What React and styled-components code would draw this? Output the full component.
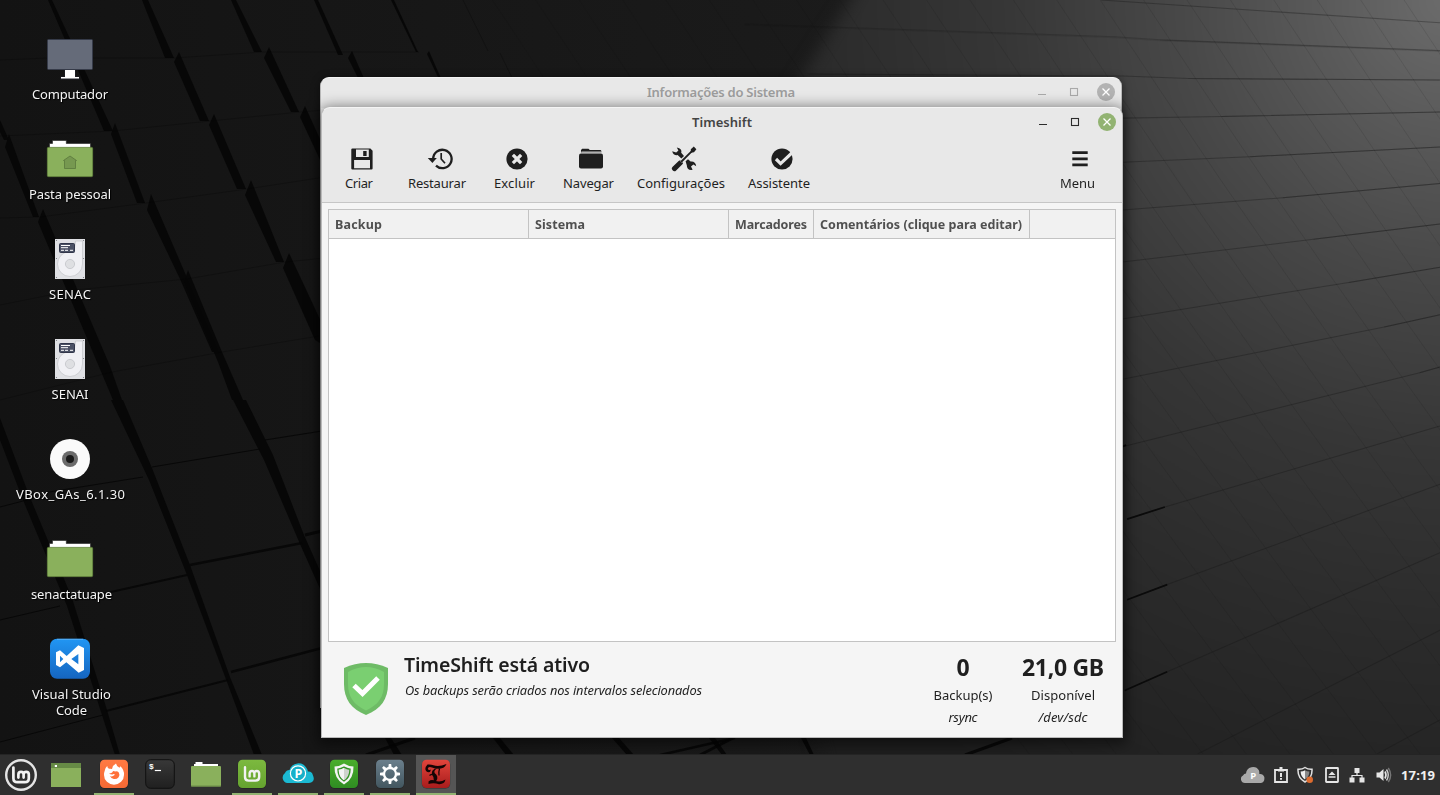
import React, { useLayoutEffect, useRef, useState } from "react";
import styled, { createGlobalStyle } from "styled-components";

const Global = createGlobalStyle`
  * { box-sizing: border-box; }
  html, body { margin: 0; padding: 0; overflow: hidden; background: #151515; }
  body { font-family: "Noto Sans", "Open Sans", sans-serif; font-size: 13px; color: #1f1f1f; }
  svg { display: block; flex: none; }
`;

/* ---------- text tracked to a given width ---------- */
const Tracked = styled.span`
  display: block;
  white-space: nowrap;
`;

function Fit({ w, children }) {
  const ref = useRef(null);
  const [spacing, setSpacing] = useState(0);
  useLayoutEffect(() => {
    const range = document.createRange();
    range.selectNodeContents(ref.current);
    const natural = range.getBoundingClientRect().width;
    setSpacing((w - natural) / Math.max(1, children.length - 1));
  }, [w, children]);
  return (
    <Tracked ref={ref} style={{ letterSpacing: spacing, width: w }}>
      {children}
    </Tracked>
  );
}

/* ---------- page ---------- */
const Screen = styled.main`
  position: relative;
  width: 1440px;
  height: 795px;
  display: flex;
  flex-direction: column;
  overflow: hidden;
`;
const Backdrop = styled.svg`
  position: absolute;
  inset: 0;
`;
const Desktop = styled.section`
  position: relative;
  flex: 1;
  min-height: 0;
  padding-top: 34px;
`;
const Shortcuts = styled.div`
  width: 140px;
  display: flex;
  flex-direction: column;
`;
const Shortcut = styled.div`
  height: 100px;
  display: flex;
  flex-direction: column;
  align-items: center;
  color: #f4f4f4;
  line-height: 16px;
  text-shadow: 1px 1px 1px #000;
`;
const ShortcutArt = styled.div`
  height: 50px;
  margin-bottom: 2px;
`;
const ShortcutLine = styled.div`
  transform: translateX(${(p) => p.$shift || 0}px);
`;

/* ---------- windows ---------- */
const Window = styled.article`
  position: absolute;
  left: ${(p) => p.$x}px;
  top: ${(p) => p.$y}px;
  width: 802px;
  height: 631px;
  border: 1px solid #b9b9b9;
  border-top-color: #f4f4f4;
  border-radius: 9px 9px 0 0;
  background: #f5f5f5;
  box-shadow: 0 ${(p) => (p.$front ? "3px 14px 3px rgba(0,0,0,.5)" : "2px 8px 1px rgba(0,0,0,.4)")};
  display: flex;
  flex-direction: column;
`;
const TitleBar = styled.header`
  height: 30px;
  padding-bottom: 3px;
  display: grid;
  grid-template-columns: 1fr auto 1fr;
  align-items: center;
  background: #e8e8e8;
  border-radius: 8px 8px 0 0;
  color: ${(p) => (p.$active ? "#444" : "#9d9d9d")};
  font-weight: 600;
  line-height: 16px;
`;
const Controls = styled.div`
  justify-self: end;
  display: flex;
  padding-right: 5px;
`;
const Toolbar = styled.nav`
  height: 65px;
  padding: 8px 12px 0 6px;
  display: flex;
  background: #e8e8e8;
  border-bottom: 1px solid #c6c6c6;
`;
const Tool = styled.button`
  all: unset;
  width: ${(p) => p.$w}px;
  display: flex;
  flex-direction: column;
  align-items: center;
  line-height: 18px;
  ${(p) => p.$end && "margin-left: auto;"}
`;
const ToolArt = styled.div`
  padding-left: ${(p) => p.$nudge}px;
  height: 28px;
`;
const Body = styled.div`
  flex: 1;
  padding: 6px 6px 0;
  display: flex;
  flex-direction: column;
`;
const Table = styled.div`
  height: 433px;
  border: 1px solid #c3c3c3;
  background: #fff;
`;
const Head = styled.div`
  display: grid;
  grid-template-columns: 200px 200px 85px 216px 1fr;
  height: 29px;
  background: #f1f1f1;
  border-bottom: 1px solid #c3c3c3;
`;
const HeadCell = styled.div`
  padding: 6px 0 0 6px;
  border-right: 1px solid #c3c3c3;
  color: #505050;
  font-weight: 700;
  font-size: 12.5px;
  line-height: 18px;
  &:last-child { border-right: 0; }
`;
const Status = styled.footer`
  display: flex;
  padding: 11px 3px 0 16px;
`;
const StatusText = styled.div`
  margin: -1px auto 0 16px;
`;
const StatusTitle = styled.h1`
  margin: 0;
  font-size: 19.5px;
  font-weight: 600;
  line-height: 25px;
`;
const Italic = styled.div`
  font-style: italic;
  line-height: 22px;
  margin-top: ${(p) => p.$top || 0}px;
  ${(p) => p.$small && "font-size: 12.8px; padding-left: 1px;"}
`;
const Stat = styled.div`
  width: ${(p) => p.$w}px;
  display: flex;
  flex-direction: column;
  align-items: center;
  line-height: 22px;
`;
const StatValue = styled.div`
  font-size: 23px;
  font-weight: 700;
  line-height: 28px;
  margin-bottom: 3px;
`;
const ShieldBox = styled.div`
  padding-top: 2px;
`;

/* ---------- taskbar ---------- */
const Taskbar = styled.footer`
  position: relative;
  height: 41px;
  display: flex;
  background: #2f2f2f;
  border-top: 1px solid #242424;
  padding-left: 1px;
`;
const Launcher = styled.div`
  width: 40px;
  margin-right: ${(p) => p.$gap}px;
  display: flex;
  align-items: center;
  justify-content: center;
  background: ${(p) => (p.$active ? "#555" : "transparent")};
  border-bottom: 2px solid ${(p) => (p.$open ? "#92b372" : "transparent")};
`;
const Tray = styled.div`
  margin-left: auto;
  display: flex;
  align-items: center;
  padding-right: 5px;
  color: #f0f0f0;
  font-weight: 700;
`;
const TrayItem = styled.div`
  margin-right: ${(p) => p.$gap}px;
`;

/* ---------- wallpaper ---------- */
const gaps = [
  "48,0 52,0 113,131 104,131", "142,0 148,0 174,58 165,58", "231,0 236,0 262,52 254,52",
  "314,0 318,0 343,55 338,55", "391,0 394,0 418,52 416,52", "174,62 179,52 209,121 200,121",
  "264,58 269,47 299,112 291,112", "348,58 352,51 370,92 365,92", "427,54 429,51 447,92 445,92",
  "0,120 9,140 4,140 0,132", "111,134 115,123 145,203 137,203", "209,125 214,114 246,189 237,189",
  "300,117 305,106 325,150 321,162", "5,147 9,134 39,217 33,217", "38,222 43,209 110,366 122,400 113,400",
  "147,210 151,194 185,273 219,352 212,352 180,279", "245,195 251,180 284,262 276,262",
  "283,268 289,253 325,330 325,346 315,340", "184,282 188,270 222,352 243,400 232,400 218,362",
  "0,418 29,495 72,598 107,710 120,755 115,755 101,712 67,606 23,500 0,440",
  "111,400 123,400 152,468 190,565 230,677 262,755 254,755 227,682 185,570 149,480",
  "233,400 246,400 273,455 304,535 325,582 325,600 300,544 264,460",
  "385,738 391,738 402,755 394,755", "493,738 500,738 514,755 506,755", "612,738 619,738 634,755 627,755",
  "709,738 715,738 727,755 722,755", "801,738 806,738 814,755 810,755",
];
const seams = [
  ["0,60 48,58 174,58 263,52 419,52", 0.5, 0.45], ["0,136 113,131 210,121 300,112 325,110", 0.5, 0.45],
  ["0,218 40,217 146,203 247,189 325,177", 0.5, 0.45], ["0,305 75,290 187,279 285,262 325,258", 0.5, 0.45],
  ["0,400 112,372 222,352 325,335", 0.5, 0.45], ["0,507 27,500", 1], ["43,493 143,477", 1], ["152,467 260,449", 1],
  ["265,440 322,431", 1.2], ["0,620 60,606", 1], ["75,600 187,575", 2], ["190,565 302,543", 2.4],
  ["305,535 322,531", 3], ["0,742 103,715", 1], ["106,711 228,680", 2.2], ["231,672 322,648", 2.6],
  ["366,755 415,738", 3], ["660,755 735,738", 2.4], ["700,755 733,738", 3], ["965,755 1012,738", 3],
  ["463,0 488,51", 0.5, 0.6], ["500,53 518,90", 0.5, 0.6],
];
const rows = [
  "850,0 1568,45", "95,48 880,73 975,79 1568,100", "230,146 895,150 1035,155 1568,158",
  "895,233 1105,230 1568,221", "895,320 1165,309 1568,290", "895,414 1235,390 1568,362",
  "895,517 1300,472 1568,442", "895,629 1375,557 1568,527", "895,748 1450,645 1568,621",
  "895,881 1525,735 1568,724", "905,1024 985,1000 1568,840", "905,1183 990,1153 1568,955",
  "900,1362 990,1325 1568,1090", "1055,1487 1568,1243", "1435,1487 1568,1420",
];
const Wallpaper = () => (
  <Backdrop width="1440" height="795" viewBox="0 0 1440 795">
    <defs>
      <linearGradient id="dark"><stop offset="0" stopColor="#131313" /><stop offset="1" stopColor="#1b1b1b" /></linearGradient>
      <radialGradient id="lit" gradientUnits="userSpaceOnUse" cx="1450" cy="0" r="900">
        <stop offset="0" stopColor="#6c6c6c" /><stop offset=".14" stopColor="#5a5a5a" />
        <stop offset=".3" stopColor="#484848" /><stop offset=".5" stopColor="#363636" />
        <stop offset=".7" stopColor="#2b2b2b" /><stop offset="1" stopColor="#1e1e1e" />
      </radialGradient>
      <filter id="soft" x="-20%" y="-20%" width="140%" height="140%" colorInterpolationFilters="sRGB"><feGaussianBlur stdDeviation="8" /></filter>
      <filter id="edge" colorInterpolationFilters="sRGB"><feGaussianBlur stdDeviation=".7" /></filter>
    </defs>
    <rect width="860" height="795" fill="url(#dark)" />
    <rect x="860" width="580" height="795" fill="#1b1b1b" />
    <path d="M888 -60 L790 95 L700 300 L850 860 H1520 V-60Z" fill="url(#lit)" filter="url(#soft)" />
    <g filter="url(#edge)">
      {gaps.map((p) => <polygon key={p} points={p} fill="#060606" opacity=".92" />)}
      {seams.map(([p, w, o = 0.85]) => <polyline key={p} points={p} fill="none" stroke="#060606" strokeWidth={w} opacity={o} />)}
    </g>
    <g transform="scale(.4719 .507) translate(1483.4 0)" fill="none" stroke="#141414">
      {rows.map((p) => <polyline key={p} points={p} strokeWidth="2" opacity=".32" />)}
      {Array.from({ length: 22 }, (_, i) => {
        const x = -440 + i * 92;
        return <path key={i} d={`M${x} 0 Q${x + 500} 710 ${x + 1140} 1490`} strokeWidth="1.6" opacity=".15" />;
      })}
      <path d="M975 79L1568 100M1035 155L1568 158M1105 230L1568 221M1165 309L1568 290M1235 390L1568 362M1300 472L1568 442M1375 557L1568 527M1450 645L1568 621M1525 735L1568 724" strokeWidth="2" opacity=".2" />
      <path d="M905 1024 L985 1000 M905 1183 L990 1153 M900 1362 L990 1325 M895 881L903 878" stroke="#0b0b0b" strokeWidth="3.4" />
    </g>
  </Backdrop>
);

/* ---------- desktop art, 50x50 ---------- */
const Art = ({ children }) => <svg width="50" height="50" viewBox="45 34 50 50">{children}</svg>;
const ComputerArt = () => (
  <Art>
    <path d="M64.5 69h11v7.5h4v3h-19v-3h4z" fill="#20232b" />
    <path d="M65 69h10v8h4v1.600H61V77h4z" fill="#fff" />
    <rect x="47.5" y="39.5" width="45" height="30" rx="1" fill="#656b79" stroke="#363b49" />
  </Art>
);
const FolderArt = ({ home }) => (
  <Art>
    <path d="M49.5 49V43.5h3V40.5h13.8v3h24.2V49z" fill="#fff" stroke="#222" strokeWidth=".6" />
    <rect x="47.4" y="47.4" width="45.2" height="29.2" rx="1" fill="#8ab05c" stroke="#698a43" strokeWidth=".9" />
    {home && <path d="M63.5 60.5 70 56 76.5 60.5H75.5V68.5H64.5V60.5Z" fill="#769850" stroke="#5e7c3e" strokeWidth=".9" />}
  </Art>
);
const DriveArt = () => (
  <Art>
    <rect x="55" y="39" width="30" height="40" fill="#dfe0e4" />
    <path d="M75.5 41H82.5V64A12.5 12.5 0 1 1 70 51.5Q74 51.5 74.5 48Z" fill="#f0f0f4" stroke="#c7c8cc" strokeWidth=".8" />
    <circle cx="70" cy="64" r="4.6" fill="#dedfe2" stroke="#c3c4c9" strokeWidth=".8" />
    <rect x="59.5" y="43.5" width="15" height="9" rx="1" fill="#4b5165" stroke="#31364a" />
    <path d="M61 45.5h9M61 47.7h7M61 50.3h3M65 50.3h3M70 50.3h3" stroke="#fff" strokeWidth="1" />
    <g fill="#74757b"><circle cx="56.5" cy="40.5" r=".6" /><circle cx="83.5" cy="40.5" r=".6" /><circle cx="56.5" cy="58.5" r=".6" /><circle cx="83.5" cy="58.5" r=".6" /><circle cx="56.5" cy="77.5" r=".6" /><circle cx="83.5" cy="77.5" r=".6" /></g>
  </Art>
);
const DiscArt = () => (
  <Art>
    <circle cx="70" cy="59" r="20" fill="#fafafa" />
    <circle cx="70" cy="59" r="8" fill="#6b6b6b" />
    <circle cx="70" cy="59" r="4" fill="#1a1a1a" />
  </Art>
);
const CodeArt = () => (
  <Art>
    <defs><linearGradient id="code" x2="0" y2="1"><stop stopColor="#2196f3" /><stop offset="1" stopColor="#1565c0" /></linearGradient></defs>
    <rect x="50" y="38.8" width="40" height="40" rx="7" fill="url(#code)" />
    <path d="M57 39.3h26" stroke="#64b5f6" strokeWidth=".8" />
    <path transform="translate(0 -200) scale(.33333)" fillRule="evenodd" fill="#fff"
      d="M235 736l17 8v66l-16 8-37-31-19 15-12-7v-38l12-6 20 17zM235 762l-21 15 21 16zM180 767v20l10-10z" />
  </Art>
);

const shortcuts = [
  [<ComputerArt />, [["Computador", 76, 0]]],
  [<FolderArt home />, [["Pasta pessoal", 82, 0]]],
  [<DriveArt />, [["SENAC", 42, 0]]],
  [<DriveArt />, [["SENAI", 37, 0]]],
  [<DiscArt />, [["VBox_GAs_6.1.30", 109, 0.5]]],
  [<FolderArt />, [["senactatuape", 81, 1.5]]],
  [<CodeArt />, [["Visual Studio", 79, 1.5], ["Code", 31, 1.5]]],
];

/* ---------- window parts ---------- */
const WindowButtons = ({ active }) => {
  const c = active ? "#2c2c2c" : "#a9a9a9";
  return (
    <Controls>
      <svg width="80" height="20" viewBox="0 0 80 20">
        <path d="M2 12.5h8" stroke={c} />
        <rect x="34.5" y="6.5" width="7" height="7" fill="none" stroke={c} strokeWidth="1.1" />
        <circle cx="70" cy="10" r="9" fill={active ? "#92b372" : "#b3b3b3"} />
        <path d="M66.5 6.5l7 7M73.5 6.5l-7 7" stroke="#fff" strokeWidth="1.3" />
      </svg>
    </Controls>
  );
};
const WindowTitle = ({ w, active, children }) => (
  <TitleBar $active={active}>
    <span />
    <Fit w={w}>{children}</Fit>
    <WindowButtons active={active} />
  </TitleBar>
);

/* ---------- toolbar icons, 26x26 around the centre ---------- */
const Glyph = ({ children }) => <svg width="26" height="26" viewBox="-13 -13 26 26" fill="#1f1f1f">{children}</svg>;
const SaveGlyph = () => (
  <Glyph>
    <path fillRule="evenodd" d="M-9.6-10.5H8.4L10.6-8.3V9.5Q10.6 10.6 9.5 10.6H-9.6Q-10.7 10.6-10.7 9.5V-9.4Q-10.7-10.5-9.6-10.5ZM-6-9.4V-2.1H6.8V-9.4ZM-7.9 1V9.3H8V1Z" />
    <rect x="1.2" y="-8" width="3.4" height="5" />
  </Glyph>
);
const RestoreGlyph = () => (
  <Glyph>
    <path d="M-8 0A9.2 9.2 0 1 1-5.2 6.6" fill="none" stroke="#1f1f1f" strokeWidth="2.3" transform="translate(1.2 0)" />
    <path d="M-12.2-1H-3.2L-7.6 4Z" />
    <path d="M1.2-6V0L5 4.2" fill="none" stroke="#1f1f1f" strokeWidth="1.7" />
  </Glyph>
);
const DeleteGlyph = () => (
  <Glyph>
    <circle r="10.6" />
    <path d="M-3-3L3 3M3-3L-3 3" stroke="#e8e8e8" strokeWidth="3.2" strokeLinecap="square" />
  </Glyph>
);
const FolderGlyph = () => (
  <Glyph>
    <path d="M-10-6.6V-9L-8.8-10.3H-2.5L-1.2-9H9.3Q10.3-9 10.3-7.8V-6.6Z" />
    <rect x="-12" y="-5.6" width="24" height="15.2" rx="2" />
    <path d="M-9.6-6.9H10" stroke="#c4c4c4" strokeWidth="1.200" />
  </Glyph>
);
const SettingsGlyph = () => (
  <Glyph>
    <path d="M-11.8-7.8Q-10.8-3.4-6.4-3.9L-2.6-.4 0-3-2.8-6.2Q-1.4-10.4-7.2-11.6L-5.6-8.6-7.8-6.6Z" />
    <path d="M1.6 2.2 4 .2 6.6 2.6Q11.4 2 12.2 7.2L9.4 5.4 7 7.6 8.6 10.8Q2.8 11.6 2.8 6.2Z" />
    <path d="M-9.600 9.600-3.600 3.800" stroke="#1f1f1f" strokeWidth="5" strokeLinecap="round" />
    <path d="M-3 3 9.4-9.3" stroke="#e8e8e8" strokeWidth="2.800" />
    <path d="M-3 3 9.4-9.3" stroke="#1f1f1f" strokeWidth="1.8" />
    <path d="M6.8-9.8 9.8-12.400 12.400-9.800 10-6.800 6.800-6.2Z" />
  </Glyph>
);
const WizardGlyph = () => (
  <Glyph>
    <circle r="10.6" />
    <path d="M-6 0L-1.4 4.6L12-8" fill="none" stroke="#e8e8e8" strokeWidth="3.2" />
  </Glyph>
);
const MenuGlyph = () => (
  <Glyph><path d="M-7.7-6.3H7.7M-7.7-.2H7.7M-7.7 5.9H7.7" stroke="#1f1f1f" strokeWidth="2.8" /></Glyph>
);
const tools = [
  ["Criar", 28, 62, <SaveGlyph />, 6], ["Restaurar", 58, 94, <RestoreGlyph />, 5], ["Excluir", 41, 61, <DeleteGlyph />, 4],
  ["Navegar", 51, 87, <FolderGlyph />, 4], ["Configurações", 88, 98, <SettingsGlyph />, 6],
  ["Assistente", 62, 98, <WizardGlyph />, 5], ["Menu", 35, 65, <MenuGlyph />, 4, true],
];
const heads = [["Backup", 47], ["Sistema", 50], ["Marcadores", 72], ["Comentários (clique para editar)", 202]];

const Shield = () => (
  <ShieldBox>
    <svg width="44" height="60" viewBox="344 655 44 60">
      <path d="M344 668Q355 663 366 663T388 668V684C388 699 381 709 366 715C351 709 344 699 344 684Z" fill="#6ebb66" />
      <path d="M348 672Q357 667 366 667T384 672V684C384 697 378 705 366 710.500C354 705 348 697 348 684Z" fill="#7acf71" />
      <path d="M354 685.500L362.500 693.500L378 678" fill="none" stroke="#fff" strokeWidth="5" />
    </svg>
  </ShieldBox>
);

/* ---------- taskbar art ---------- */
const Tile = ({ id, a, b, children }) => (
  <svg width="30" height="30" viewBox="-15 -15 30 30">
    <defs><linearGradient id={id} x2="0" y2="1"><stop stopColor={a} /><stop offset="1" stopColor={b} /></linearGradient></defs>
    <rect x="-14.300" y="-14" width="28.600" height="28.800" rx="5" fill="#111" opacity=".4" />
    <rect x="-14" y="-14.200" width="28" height="28.200" rx="4.500" fill={`url(#${id})`} />
    {children}
  </svg>
);
const MintMark = ({ s = 1, w = 2.6 }) => (
  <path transform={`scale(${s})`} fill="none" stroke="#f2f2f2" strokeWidth={w} strokeLinecap="round" strokeLinejoin="round"
    d="M-7.600-7.400V3.200Q-7.600 7.200-3.600 7.200H3.800Q7.800 7.200 7.800 3.200V-.6Q7.800-3.200 5.200-3.200T2.600-.6V2.600M2.600-.6Q2.600-3.200 0-3.200T-2.600-.6V2.600" />
);
const MintMenu = () => (
  <svg width="34" height="34" viewBox="-17 -18 34 34">
    <circle r="14.800" fill="none" stroke="#e4e4e4" strokeWidth="2.400" />
    <MintMark w={2.700} />
  </svg>
);
const ShowDesktop = () => (
  <svg width="30" height="26" viewBox="0 0 30 26">
    <rect x="0" y="2" width="30" height="24" fill="#8ab05c" /><rect y="2" width="30" height="5" fill="#668a45" />
    <rect x="3.800" y="4" width="2.200" height="2" fill="#fff" />
  </svg>
);
const Firefox = () => (
  <Tile id="ff" a="#ff7a43" b="#f56a35">
    <path d="M-9.200-3.500Q-8.800-6.500-6.800-8Q-6.600-6-5-5.200Q-3.500-5.600-2-5Q-1-9 2-10.400Q2.500-7.500 5.500-6.200L6.500-7.800Q10.400-4 10 1A10 9.700 0 0 1-10 1Q-10-1.500-9.200-3.500Z" fill="#fff" />
    <path d="M-5-.5Q-1.500-1-1-3L1.500-2.600Q3.400-3 4.800-1.500Q6.200 1 4.600 3.200Q2.800 5.400-.2 5Q-3 4.600-4 2Q-2.500 3-.6 1.800Q1.200 1 .6.200Q-1-.2-1.500.5Q-3.500.6-5-.5Z" fill="#ff7139" />
  </Tile>
);
const TermText = styled.text`
  font: 700 8px "Liberation Mono", monospace;
  fill: #fff;
`;
const Terminal = () => (
  <Tile id="tm" a="#383838" b="#202020">
    <rect x="-14.300" y="-14.300" width="28.600" height="28.600" rx="5" fill="none" stroke="#111" />
    <TermText x="-11" y="-5">$</TermText>
    <path d="M-5.200-3.500H1" stroke="#fff" strokeWidth="1.200" />
  </Tile>
);
const SmallFolder = () => (
  <svg width="30" height="26" viewBox="0 0 30 26">
    <path d="M3 6V3H4.500V1H11.500V3H27V6Z" fill="#fff" /><rect y="5" width="30" height="20.500" rx="1" fill="#8ab05c" />
    <path d="M0 25H30" stroke="#6d8d49" />
  </svg>
);
const Pletter = styled.text`
  font: 700 ${(p) => p.$size}px "Open Sans", sans-serif;
  fill: #fff;
  text-anchor: middle;
`;
const CloudApp = () => (
  <svg width="34" height="26" viewBox="-17 -13 34 26">
    <path d="M-11 9A5.600 5.600 0 0 1-13-1A5 5 0 0 1-8.500-4A9.300 9.300 0 0 1 8.500-6Q10-4 9.800-2.500Q14-3 14.800 1Q18 8 11 9Z" fill="#1bb9d2" />
    <circle cy="-.6" r="7.600" fill="#16b0c9" stroke="#fff" strokeWidth="1.200" />
    <Pletter $size={12.5} x=".3" y="3.900">P</Pletter>
  </svg>
);
const ShieldTile = () => (
  <Tile id="sh" a="#4aae2c" b="#2f8d22">
    <path d="M0-10.500Q4.500-7.500 9.500-7.500Q10 5 0 10.500Q-10 5-9.500-7.500Q-4.500-7.500 0-10.500Z" fill="#f4f4f4" />
    <path d="M0-6.800Q3-5 6-4.800Q6 3.500 0 7Q-6 3.500-6-4.800Q-3-5 0-6.800Z" fill="#cfd3cd" stroke="#359426" strokeWidth="1.400" />
    <path d="M0-6Q-3-4.500-5.300-4.200Q-5.200 3.200 0 6.200Z" fill="#f4f4f4" />
  </Tile>
);
const GearTile = () => (
  <Tile id="gr" a="#6b7f8c" b="#42565f">
    <circle r="6" fill="none" stroke="#fff" strokeWidth="2.300" />
    {[0, 45, 90, 135, 180, 225, 270, 315].map((a) => (
      <path key={a} transform={`rotate(${a})`} d="M-1.700-6.500L-1.200-10H1.200L1.700-6.500Z" fill="#fff" />
    ))}
  </Tile>
);
const TimeshiftTile = () => (
  <Tile id="ts" a="#e2453c" b="#a81c1c">
    <g fill="#140505">
      <path d="M-8.500-9.500Q-5-9.800-2.500-8.700Q3-7 10.500-10Q8.500-5.500 3.500-5.300Q-1-5.200-4-6.600Q-8-8-8.200-5.200Q-7.500-3-5-4.600Q-5.500-1.200-8.500-2Q-11.500-3.500-10.300-7Z" />
      <path d="M1.200-5.800Q-2.800-3.400-1.200-.8Q2.800 2.200.6 6.600Q-1 8-3.200 8Q-1.600 5.600-2.600 3Q-5.400-.6-3.200-3.800Q-1.400-5.600 1.200-5.800Z" />
      <path d="M-7.500 7.400Q-4.500 5-1.500 6.600Q4 9 9.500 5.600Q8.500 10.400 3 10.200Q-2.500 8.400-7.500 10Z" />
    </g>
    <path d="M3.500-5.500Q2.500-2 3 1.500" fill="none" stroke="#140505" strokeWidth="1.200" />
    <path d="M-6.500 1.500Q-4-.5-2 .8" fill="none" stroke="#140505" strokeWidth="1.200" />
  </Tile>
);
const launchers = [
  [<MintMenu />, 5], [<ShowDesktop />, 8], [<Firefox />, 6, true], [<Terminal />, 6], [<SmallFolder />, 6],
  [<Tile id="mt" a="#7cb93f" b="#65a32f"><MintMark s={0.92} /></Tile>, 6, true],
  [<CloudApp />, 6, true], [<ShieldTile />, 6, true], [<GearTile />, 6, true], [<TimeshiftTile />, 0, true, true],
];

const TrayCloud = () => (
  <svg width="24" height="18" viewBox="0 0 24 18">
    <path d="M4 17A4 4 0 0 1 2 9.500Q3 7.500 5 7.500A7 7 0 0 1 18 4.500Q18.500 6.500 18.300 8Q22 7.500 23.300 11Q24 16 20 17Z" fill="#a9a9a9" />
    <Pletter $size={9.5} x="12.300" y="13">P</Pletter>
  </svg>
);
const TrayClip = () => (
  <svg width="14" height="18" viewBox="0 0 14 18">
    <path d="M1 4H13V16H1Z" fill="none" stroke="#e6e6e6" strokeWidth="1.800" />
    <path d="M4 3H5.500V1H8.500V3H10V5.500H4Z" fill="#e6e6e6" /><path d="M7 7V11M7 12V13.800" stroke="#e6e6e6" strokeWidth="2" />
  </svg>
);
const TrayShield = () => (
  <svg width="17" height="18" viewBox="0 0 17 18">
    <path d="M8 1.500Q11 3.500 15 3.200Q15.500 12 8 16Q.5 12 1 3.200Q5 3.500 8 1.500Z" fill="none" stroke="#e2e2e2" strokeWidth="1.500" />
    <path d="M8 4.200Q6 5.500 3.600 5.500Q3.800 11 8 13.600Z" fill="#eee" /><path d="M8 4.200Q10 5.500 12.400 5.500Q12.200 11 8 13.600Z" fill="#888" />
    <circle cx="12.700" cy="13.700" r="3.300" fill="#dd6c2f" />
  </svg>
);
const TrayEject = () => (
  <svg width="14" height="18" viewBox="0 0 14 18">
    <rect x="1" y="2" width="12" height="14" rx=".5" fill="none" stroke="#e6e6e6" strokeWidth="1.800" />
    <path d="M7 5.500L10.500 9H3.500ZM3.500 10.200H10.500V11.700H3.500Z" fill="#e6e6e6" />
  </svg>
);
const TrayNetwork = () => (
  <svg width="16" height="18" viewBox="0 0 16 18">
    <path d="M5.500 2H10.500V7H5.500ZM.5 11.500H5.500V16.500H.5ZM10.500 11.500H15.500V16.500H10.500Z" fill="#e6e6e6" />
    <path d="M8 7V9.500M3 12V9.500H13V12" fill="none" stroke="#e6e6e6" strokeWidth="1.200" />
  </svg>
);
const TrayVolume = () => (
  <svg width="16" height="18" viewBox="0 0 16 18">
    <path d="M.5 6.500H3.500L7.500 3V15L3.500 11.500H.5Z" fill="#e6e6e6" />
    <path d="M9 5.500Q11 9 9 12.500" fill="none" stroke="#e6e6e6" strokeWidth="1.600" />
    <path d="M10.500 3.500Q14 9 10.500 14.500" fill="none" stroke="#d0d0d0" strokeWidth="1.400" />
    <path d="M12.300 2Q17 9 12.300 16" fill="none" stroke="#777" strokeWidth="1.400" />
  </svg>
);
const trayItems = [[<TrayCloud />, 9], [<TrayClip />, 9], [<TrayShield />, 11], [<TrayEject />, 10], [<TrayNetwork />, 11], [<TrayVolume />, 9]];

export default function App() {
  return (
    <Screen>
      <Global />
      <Wallpaper />
      <Desktop>
        <Shortcuts>
          {shortcuts.map(([art, lines], i) => (
            <Shortcut key={i}>
              <ShortcutArt>{art}</ShortcutArt>
              {lines.map(([text, w, shift]) => (
                <ShortcutLine key={text} $shift={shift}><Fit w={w}>{text}</Fit></ShortcutLine>
              ))}
            </Shortcut>
          ))}
        </Shortcuts>
        <Window $x={320} $y={77}>
          <WindowTitle w={148}>Informações do Sistema</WindowTitle>
        </Window>
        <Window $x={321} $y={107} $front>
          <WindowTitle w={60} active>Timeshift</WindowTitle>
          <Toolbar>
            {tools.map(([label, w, box, icon, nudge, end]) => (
              <Tool key={label} $w={box} $end={end}>
                <ToolArt $nudge={nudge}>{icon}</ToolArt>
                <Fit w={w}>{label}</Fit>
              </Tool>
            ))}
          </Toolbar>
          <Body>
            <Table>
              <Head>
                {heads.map(([label, w]) => <HeadCell key={label}><Fit w={w}>{label}</Fit></HeadCell>)}
                <HeadCell />
              </Head>
            </Table>
            <Status>
              <Shield />
              <StatusText>
                <StatusTitle><Fit w={186}>TimeShift está ativo</Fit></StatusTitle>
                <Italic $top={2} $small><Fit w={297}>Os backups serão criados nos intervalos selecionados</Fit></Italic>
              </StatusText>
              <Stat $w={100}>
                <StatValue>0</StatValue>
                <Fit w={59}>Backup(s)</Fit>
                <Italic><Fit w={29}>rsync</Fit></Italic>
              </Stat>
              <Stat $w={100}>
                <StatValue><Fit w={82}>21,0 GB</Fit></StatValue>
                <Fit w={64}>Disponível</Fit>
                <Italic><Fit w={49}>/dev/sdc</Fit></Italic>
              </Stat>
            </Status>
          </Body>
        </Window>
      </Desktop>
      <Taskbar>
        {launchers.map(([icon, gap, open, active], i) => (
          <Launcher key={i} $gap={gap} $open={open} $active={active}>{icon}</Launcher>
        ))}
        <Tray>
          {trayItems.map(([icon, gap], i) => <TrayItem key={i} $gap={gap}>{icon}</TrayItem>)}
          <Fit w={34}>17:19</Fit>
        </Tray>
      </Taskbar>
    </Screen>
  );
}
